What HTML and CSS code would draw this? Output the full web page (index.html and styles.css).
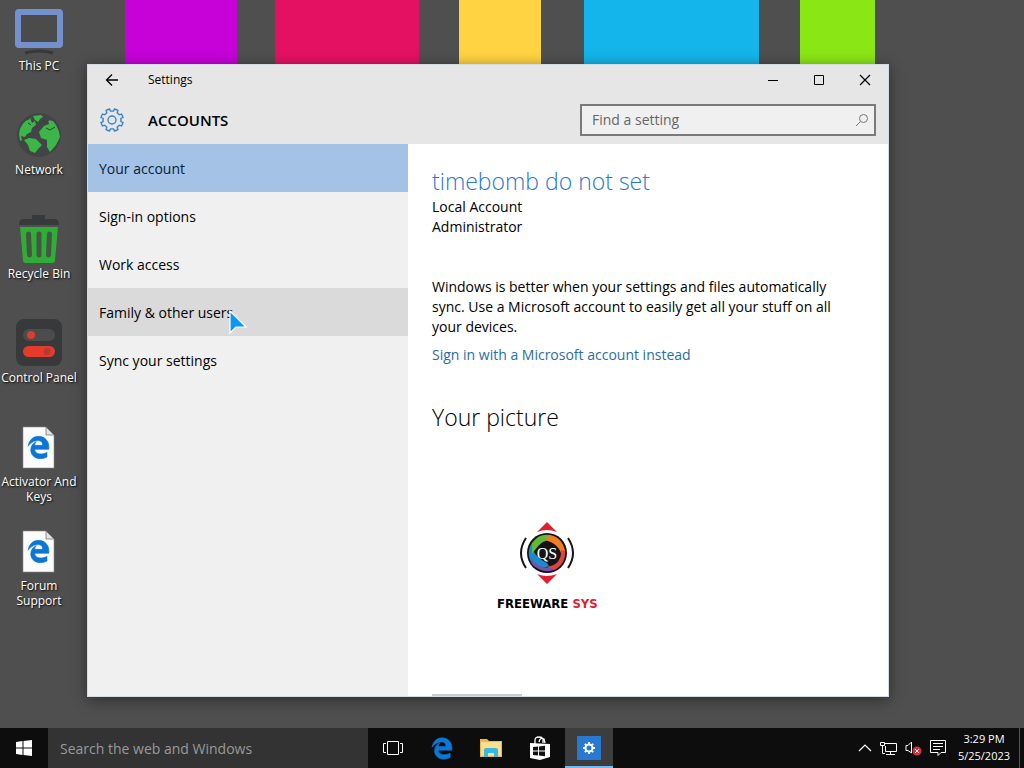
FILE: index.html
```html
<!DOCTYPE html>
<html lang="en">
<head>
<meta charset="utf-8">
<meta name="viewport" content="width=device-width, initial-scale=1">
<title>Settings - Accounts</title>
<link rel="stylesheet" href="styles.css">
</head>
<body>
<svg class="defs" aria-hidden="true">
  <symbol id="edge" viewBox="0 0 512 512"><path d="M486.286 243.671c0-44.032-7.754-84.465-28.801-122.405C416.498 47.879 343.912 8.001 258.893 8.001 118.962 7.724 40.617 113.214 26.056 227.679c42.429-61.312 117.073-121.376 220.375-124.966 0 0 109.666 0 99.419 104.957H169.997c6.369-37.386 18.554-58.986 34.339-78.926-75.048 34.893-121.850 96.096-120.742 188.315.83 71.448 50.124 144.836 120.743 171.976 83.357 31.847 192.776 7.200 240.132-21.324V363.307c-80.864 56.494-270.871 60.925-272.255-67.572h314.073z"/></symbol>
  <symbol id="page" viewBox="0 0 48 48"><path fill="#fcfcfc" stroke="#8c8c8c" stroke-width=".6" d="M8 5h23l8 8v33H8z"/><path fill="#e3e3e3" stroke="#777" stroke-width=".8" d="M31 5v8h8z"/><use href="#edge" x="12" y="14" width="23" height="23" fill="#0b76d4" stroke="#0b76d4" stroke-width="14"/></symbol>
</svg>

<div class="desktop">
  <nav class="shortcuts" aria-label="Desktop">
    <a class="shortcut" href="#pc">
      <svg class="shortcut-icon" viewBox="0 0 48 48"><rect x="3" y="6" width="42" height="33" rx="1" fill="#4b4b4c" stroke="#7491cd" stroke-width="6"/><path d="M10 47q14-4 28 0" fill="none" stroke="#393939" stroke-width="3"/></svg>
      <span>This PC</span>
    </a>
    <a class="shortcut" href="#network">
      <svg class="shortcut-icon" viewBox="0 0 48 48"><circle cx="24" cy="25" r="22" fill="#434446"/><g fill="#3cb648"><path d="M18 6l8-1 2 2-3 2-2 3-3-2zM15 8l2 5 3-2 1 4-4 3-1 4-4 2-2 3-4-1 1 4-2 1-1-7q1-12 13-16z"/><path d="M9 30l5-2 7 1 6 6-4 4-3 4-5-2-2-6zM29 16l5-2-1-4 5 1q6 7 7 16l-4 8-6 7-3-5v-7l-6-2-2-6z"/></g><path d="M27 10l3 3 4-3M31 18l4 2 5-3M13 13l3 2M19 17l3 1" fill="none" stroke="#35423a"/></svg>
      <span>Network</span>
    </a>
    <a class="shortcut" href="#bin">
      <svg class="shortcut-icon" viewBox="0 0 48 48"><path d="M17 1h13v4h10q4 0 4 6H4q0-6 4-6h9z" fill="#38393b"/><path d="M5 13h38l-3 33q0 3-3 3H11q-3 0-3-3z" fill="#30ad36"/><path d="M13.500 20l1 21M24 20v21M34.500 20l-1 21" stroke="#435743" stroke-width="5" stroke-linecap="round"/></svg>
      <span>Recycle Bin</span>
    </a>
    <a class="shortcut" href="#control">
      <svg class="shortcut-icon" viewBox="0 0 48 48"><rect x="1" y="1" width="46" height="47" rx="8" fill="#38393b"/><rect x="8" y="11" width="32" height="12" rx="6" fill="#4b4c4c"/><circle cx="16" cy="17" r="4" fill="#d93c32"/><rect x="8" y="28" width="32" height="11" rx="5.500" fill="#e63a2d"/><circle cx="32" cy="33.500" r="3.500" fill="#b43b32"/></svg>
      <span>Control Panel</span>
    </a>
    <a class="shortcut" href="#activator">
      <svg class="shortcut-icon"><use href="#page"/></svg>
      <span>Activator And Keys</span>
    </a>
    <a class="shortcut" href="#forum">
      <svg class="shortcut-icon"><use href="#page"/></svg>
      <span>Forum Support</span>
    </a>
  </nav>

  <section class="window" aria-label="Settings">
    <header class="window-head">
      <div class="titlebar">
        <button class="back" type="button" aria-label="Back"><svg width="14" height="14" viewBox="0 0 14 14"><path d="M13 7H1.500M7 1.500L1.500 7 7 12.500" fill="none" stroke="#000" stroke-width="1.300"/></svg></button>
        <span class="window-title">Settings</span>
        <button class="caption" type="button" aria-label="Minimize"><svg width="12" height="12"><path d="M1 6.500h10" stroke="#000"/></svg></button>
        <button class="caption" type="button" aria-label="Maximize"><svg width="12" height="12"><path d="M1.500 1.500h9v9h-9z" fill="none" stroke="#000"/></svg></button>
        <button class="caption" type="button" aria-label="Close"><svg width="12" height="12"><path d="M1 1l10 10M11 1L1 11" stroke="#000" stroke-width="1.200"/></svg></button>
      </div>
      <div class="section-bar">
        <svg class="gear" viewBox="-12 -12 24 24"><path d="M8.900 1.500 11 2.600 9.600 5.900 7.300 5.200 5.200 7.300 5.900 9.600 2.600 11 1.500 8.900-1.500 8.900-2.600 11-5.900 9.600-5.200 7.300-7.300 5.200-9.600 5.900-11 2.600-8.900 1.500-8.900-1.500-11-2.600-9.600-5.900-7.300-5.200-5.200-7.300-5.900-9.600-2.600-11-1.500-8.900 1.500-8.900 2.600-11 5.900-9.600 5.200-7.300 7.300-5.200 9.600-5.900 11-2.600 8.900-1.500Z"/><circle r="4"/></svg>
        <h1 class="section-title">ACCOUNTS</h1>
        <label class="find">
          <input type="text" placeholder="Find a setting" aria-label="Find a setting">
          <svg width="14" height="14" viewBox="0 0 14 14"><circle cx="8.500" cy="5.500" r="4" /><path d="M5.500 8.500L1 13"/></svg>
        </label>
      </div>
    </header>
    <div class="window-body">
      <nav class="sections" aria-label="Accounts">
        <a class="section-link selected" href="#your-account">Your account</a>
        <a class="section-link" href="#sign-in">Sign-in options</a>
        <a class="section-link" href="#work">Work access</a>
        <a class="section-link hovered" href="#family">Family &amp; other users
          <svg class="cursor" width="20" height="26" viewBox="0 0 20 26"><path d="M2 2v22l6-6h10z" fill="#0c97f5" stroke="#fff" stroke-width="1.200"/></svg>
        </a>
        <a class="section-link" href="#sync">Sync your settings</a>
      </nav>
      <main class="account">
        <h2 class="user-name">timebomb do not set</h2>
        <p>Local Account</p>
        <p>Administrator</p>
        <p class="sync-note">Windows is better when your settings and files automatically sync. Use a Microsoft account to easily get all your stuff on all your devices.</p>
        <a class="text-link" href="#microsoft">Sign in with a Microsoft account instead</a>
        <h2 class="picture-title">Your picture</h2>
        <figure class="picture">
          <svg width="56" height="64" viewBox="0 0 56 64">
            <path d="M28 1l10 10q-10-4-20 0zM28 63l10-10q-10 4-20 0z" fill="#e21f2c"/>
            <path d="M7 17q-10 15 0 30M49 17q10 15 0 30" fill="none" stroke="#161616" stroke-width="2"/>
            <circle cx="28" cy="32" r="20" fill="#141414"/>
            <path d="M15 45A18 18 0 0 1 13 22Q12 34 28 42l2 3q-8 4-15 0z" fill="#198bd0"/>
            <path d="M13 22Q20 12 31 14l7 5Q24 16 16 29l-3 4z" fill="#63b839"/>
            <path d="M31 14q12 2 15 16l-3 6Q41 23 26 19z" fill="#f47b27"/>
            <path d="M46 30q1 13-11 19l-8-3q16-2 15-17z" fill="#dc4540"/>
            <path d="M36 49Q22 53 13 43l-2-7q8 12 21 11z" fill="#7651a8"/>
            <text x="28" y="38" text-anchor="middle" class="emblem">QS</text>
          </svg>
          <figcaption>FREEWARE <span>SYS</span></figcaption>
        </figure>
        <div class="next-control"></div>
      </main>
    </div>
  </section>
</div>

<footer class="taskbar">
  <button class="task" type="button" aria-label="Start"><svg width="16" height="16" viewBox="0 0 16 16"><path fill="#fff" d="M0 2l6.500-1v6.500H0zM7.500 1L16 0v7.500H7.500zM0 8.500h6.500V15L0 14zM7.500 8.500H16V16l-8.500-1z"/></svg></button>
  <input class="web-search" type="text" placeholder="Search the web and Windows" aria-label="Search the web and Windows">
  <div class="apps">
    <button class="task" type="button" aria-label="Task view"><svg width="20" height="16" fill="none" stroke="#fff"><path d="M4.500 1.500h11v13h-11zM3 3.500H.5v9H3M17 3.500h2.500v9H17"/></svg></button>
    <button class="task" type="button" aria-label="Edge"><svg width="22" height="23" fill="#0b78d7"><use href="#edge" stroke="#0b78d7" stroke-width="14"/></svg></button>
    <button class="task" type="button" aria-label="File Explorer"><svg width="22" height="20" viewBox="0 0 22 20"><path d="M0 1h7l2 2h13v16H0z" fill="#e9b650"/><path d="M1 4h20v14H1z" fill="#fbdf8c"/><path d="M4 19v-7q0-2 2-2h10q2 0 2 2v7h-4v-4H8v4z" fill="#38b7e4"/></svg></button>
    <button class="task" type="button" aria-label="Store"><svg width="22" height="24" viewBox="0 0 22 24"><path d="M6 8V4q0-3 4-3 3 0 4 2v4M10 6q1-5 5-3l1 4" fill="none" stroke="#fff" stroke-width="1.300"/><path d="M1 7l20 1v13L11 24 1 22z" fill="#fff"/><path d="M4 11l5-.5v4H4zM10 10.500l6-.7v4.700h-6zM4 15.500h5v4L4 19zM10 15.500h6v4.700l-6-.7z" fill="#111"/></svg></button>
    <button class="task active" type="button" aria-label="Settings"><svg width="24" height="24" viewBox="-12 -12 24 24"><path d="M-12-12h24v24h-24z" fill="#2779d2"/><circle r="3.500" fill="none" stroke="#fff" stroke-width="2"/><path d="M0-6v2M0 4v2M-6 0h2M4 0h2M-4.200-4.200l1.400 1.400M2.800 2.800l1.400 1.400M-4.200 4.200l1.400-1.400M2.800-2.800l1.400-1.400" stroke="#fff" stroke-width="1.800"/></svg></button>
  </div>
  <div class="tray">
    <button type="button" aria-label="Show hidden icons"><svg width="14" height="16" fill="none" stroke="#fff" stroke-width="1.200"><path d="M1 11l6-6 6 6"/></svg></button>
    <button type="button" aria-label="Network"><svg width="17" height="16" fill="none" stroke="#fff"><path d="M5 3.500h11.500v8H5.500V6M10.500 12v3M6 14.500h9M.5 2.500h4v3h-4zM2.500 6v7.500H5"/></svg></button>
    <button type="button" aria-label="Volume muted"><svg width="17" height="16" viewBox="0 0 17 16"><path d="M1 5.500h2L6.500 2v11L3 10.500H1z" fill="none" stroke="#fff"/><circle cx="12" cy="11" r="4.500" fill="#d92f38"/><path d="M10 9l4 4M14 9l-4 4" stroke="#fff"/></svg></button>
    <button type="button" aria-label="Notifications"><svg width="17" height="16" fill="none" stroke="#fff"><path d="M.5.500h15v12H11l-3 3v-3H.5zM3 3.500h10M3 6.500h10M3 9.500h7"/></svg></button>
  </div>
  <div class="clock"><time>3:29 PM</time><time>5/25/2023</time></div>
  <button class="show-desktop" type="button" aria-label="Show desktop"></button>
</footer>
</body>
</html>
```
FILE: styles.css
```css
* {
  box-sizing: border-box;
}

body {
  margin: 0;
  min-height: 100vh;
  display: flex;
  flex-direction: column;
  background: #4f4f4f;
  color: #000;
  font: 14px/20px "Open Sans", "Noto Sans", sans-serif;
}

h1, h2, p, figure {
  margin: 0;
}

button {
  padding: 0;
  border: 0;
  background: none;
  display: flex;
  align-items: center;
  justify-content: center;
}

a {
  color: inherit;
  text-decoration: none;
}

input {
  font: inherit;
  min-width: 0;
}

.defs {
  display: none;
}

.desktop {
  flex: 1;
  display: flex;
  gap: 9px;
  padding-right: 135px;
  background: linear-gradient(90deg,
    #4f4f4f 125px, #c602d9 125px 237px, #4f4f4f 237px 275px,
    #e41163 275px 419px, #4f4f4f 419px 459px, #ffd341 459px 541px,
    #4f4f4f 541px 584px, #13b5ea 584px 759px, #4f4f4f 759px 800px,
    #8be616 800px 875px, #4f4f4f 875px) no-repeat 0 0 / 100% 80px;
}

.shortcuts {
  width: 78px;
  padding-top: 6px;
}

.shortcut {
  display: flex;
  flex-direction: column;
  align-items: center;
  gap: 4px;
  min-height: 104px;
  color: #fff;
  font-size: 12px;
  line-height: 15px;
  text-align: center;
  text-shadow: 1px 1px 2px #000;
}

.shortcut-icon {
  width: 48px;
  height: 48px;
  overflow: visible;
}

.window {
  flex: 1;
  min-width: 0;
  margin: 64px 0 31px;
  display: flex;
  flex-direction: column;
  border: 1px solid #d5dce6;
  background: #fff;
  box-shadow: 0 3px 14px rgba(0, 0, 0, 0.45);
}

.window-head {
  height: 79px;
  background: #e6e6e6;
}

.titlebar {
  display: flex;
  align-items: center;
  height: 30px;
  font-size: 12px;
}

.back {
  width: 48px;
  height: 30px;
}

.window-title {
  flex: 1;
  padding-left: 12px;
}

.caption {
  width: 46px;
  height: 30px;
}

.section-bar {
  display: flex;
  align-items: center;
  height: 50px;
  padding: 0 12px;
}

.gear {
  width: 24px;
  height: 24px;
  fill: none;
  stroke: #3b82c8;
  stroke-width: 1.4;
}

.section-title {
  flex: 1;
  padding-left: 24px;
  font-size: 15px;
  font-weight: 600;
}

.find {
  display: flex;
  align-items: center;
  width: 296px;
  height: 32px;
  padding: 0 5px 0 10px;
  border: 2px solid #7a7a7a;
  background: #f0f0f0;
}

.find input {
  flex: 1;
  padding: 0;
  border: 0;
  background: none;
}

.find input::placeholder {
  color: #666;
}

.find svg {
  fill: none;
  stroke: #777;
}

.window-body {
  flex: 1;
  display: flex;
}

.sections {
  width: 320px;
  background: #f0f0f0;
}

.section-link {
  display: flex;
  align-items: center;
  position: relative;
  height: 48px;
  padding: 2px 0 0 11px;
}

.selected {
  background: #a3c2e5;
  color: #061e3b;
}

.hovered {
  background: #dadada;
}

.cursor {
  position: absolute;
  left: 140px;
  top: 21px;
}

.account {
  flex: 1;
  display: flex;
  flex-direction: column;
  align-items: flex-start;
  padding: 23px 24px 0;
}

.user-name,
.picture-title {
  font-size: 23px;
  font-weight: 300;
  line-height: 28px;
}

.user-name {
  margin-bottom: 2px;
  color: #2878c8;
}

.sync-note {
  max-width: 416px;
  margin: 40px 0 8px;
}

.text-link {
  color: #2a6ca8;
}

.picture-title {
  margin-top: 38px;
}

.picture {
  display: flex;
  flex-direction: column;
  align-items: center;
  gap: 9px;
  margin: 90px 0 0 65px;
}

.picture figcaption {
  font: bold 13px/20px "DejaVu Sans Condensed", "DejaVu Sans", sans-serif;
}

.picture figcaption span {
  color: #dc232c;
}

.emblem {
  fill: #fff;
  font: 16px "Liberation Serif", serif;
}

.next-control {
  width: 90px;
  height: 2px;
  margin-top: auto;
  background: #ccc;
}

.taskbar {
  display: flex;
  height: 40px;
  background: #0d0d0d;
  color: #fff;
}

.task {
  width: 48px;
  height: 40px;
}

.web-search {
  width: 320px;
  padding: 2px 12px 0;
  border: 0;
  background: #333;
}

.web-search::placeholder {
  color: #999;
}

.apps {
  flex: 1;
  display: flex;
  gap: 1px;
  padding-left: 1px;
}

.active {
  padding-top: 2px;
  background: #3d3d3d;
  border-bottom: 2px solid #76b9ed;
}

.tray {
  display: flex;
  align-items: center;
  gap: 8px;
  padding-right: 4px;
}

.clock {
  display: flex;
  flex-direction: column;
  align-items: center;
  justify-content: center;
  width: 66px;
  padding-bottom: 2px;
  font-size: 11px;
  line-height: 17px;
}

.show-desktop {
  width: 5px;
  margin-left: 2px;
  border-left: 1px solid #555;
}
```
